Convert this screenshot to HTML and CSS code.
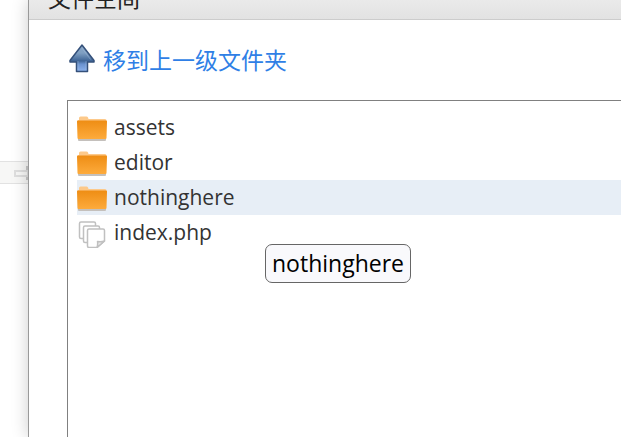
FILE: index.html
```
<!DOCTYPE html>
<html lang="zh-CN">
<head>
  <meta charset="UTF-8">
  <title>文件空间</title>
  <link rel="stylesheet" href="styles.css">
</head>
<body>
  <div class="page">
    <aside class="backdrop">
      <div class="toolbar">
        <svg class="toolbar-icon" width="14" height="18" viewBox="0 0 14 18">
          <path d="M1 7h13v5H1z" fill="#f7f7f6" stroke="#dedede" stroke-width="2"/>
          <path d="M12 2h2v4h-2zM12 13h2v3h-2z" fill="#c8c8c8"/>
        </svg>
      </div>
    </aside>
    <main class="dialog">
      <header class="dialog-header">
        <h1>文件空间</h1>
      </header>
      <div class="dialog-body">
        <a href="#" class="move-up">
          <svg width="28" height="30" viewBox="0 0 28 30">
            <defs>
              <linearGradient id="arrow" x1="0" y1="0" x2="0" y2="1">
                <stop offset="0" stop-color="#8aa6c4"/>
                <stop offset="0.3" stop-color="#7f9fc2"/>
                <stop offset="0.6" stop-color="#3f6596"/>
                <stop offset="0.72" stop-color="#6a92cf"/>
                <stop offset="1" stop-color="#8db3ee"/>
              </linearGradient>
            </defs>
            <path d="M14 1L26 16.500V18H19.500V27.500H8.500V18H2V16.500Z" fill="url(#arrow)" stroke="#34507a" stroke-width="1.500" stroke-linejoin="round"/>
            <path d="M14 4L22.500 15.500M10 17v9M18 17v9" fill="none" stroke="#a9c2e0" stroke-opacity="0.4"/>
          </svg>
          <span>移到上一级文件夹</span>
        </a>
        <div class="file-box">
          <svg class="defs" width="0" height="0">
            <defs>
              <linearGradient id="orange" x1="0" y1="0" x2="0" y2="1">
                <stop offset="0" stop-color="#ee8d14"/>
                <stop offset="1" stop-color="#fdab3c"/>
              </linearGradient>
              <symbol id="folder" viewBox="0 0 30 26">
                <path d="M1 23h28v2q0 1-1 1H2q-1 0-1-1z" fill="#c4c0bc"/>
                <path d="M2 5V3q0-1.500 1.500-1.500h6q1 0 1.500 1l.5 1.500H28q1.500 0 1.500 1.500V8H0.500V5.500z" fill="#fdc98a"/>
                <path d="M0 6.500q0-1 1-1h28q1 0 1 1l-.5 16.500q0 1-1 1H1.500q-1 0-1-1z" fill="url(#orange)"/>
              </symbol>
              <symbol id="pages" viewBox="0 0 30 30">
                <g fill="#fff" stroke="#c0c0c0" stroke-width="1.500" stroke-linejoin="round">
                  <path d="M4 4h13q1.500 0 1.500 1.500v15H4q-1.500 0-1.500-1.500V5.500Q2.500 4 4 4z"/>
                  <path d="M8 8h13q1.500 0 1.500 1.500v15H8q-1.500 0-1.500-1.500V9.500Q6.500 8 8 8z"/>
                  <path d="M12 11h14q1.500 0 1.500 1.500V23L20 29.500h-8q-1.500 0-1.500-1.500V12.500Q10.500 11 12 11z"/>
                  <path d="M27.500 23L20 29.500q1-3 .5-6 4 .5 7-.5z" fill="#e8e8e8"/>
                </g>
              </symbol>
            </defs>
          </svg>
          <ul class="file-list">
            <li><svg class="folder"><use href="#folder"/></svg><span>assets</span></li>
            <li><svg class="folder"><use href="#folder"/></svg><span>editor</span></li>
            <li class="active"><svg class="folder"><use href="#folder"/></svg><span>nothinghere</span></li>
            <li><svg class="pages"><use href="#pages"/></svg><span>index.php</span></li>
          </ul>
          <div class="tooltip" role="tooltip">nothinghere</div>
        </div>
      </div>
    </main>
  </div>
</body>
</html>
```
FILE: styles.css
```
* {
  box-sizing: border-box;
}
body {
  margin: 0;
  background: #fff;
  color: #333;
  font-family: "Open Sans", "Noto Sans CJK SC", sans-serif;
  font-size: 23px;
}
.page {
  display: flex;
  min-height: 100vh;
  overflow: hidden;
}
.backdrop {
  width: 28px;
  padding-top: 161px;
}
.toolbar {
  display: flex;
  align-items: center;
  justify-content: flex-end;
  height: 23px;
  background: #f7f7f6;
  border-top: 1px solid #e2e2e2;
  border-bottom: 1px solid #e2e2e2;
}
.dialog {
  flex: 1;
  display: flex;
  flex-direction: column;
  min-width: 0;
  background: #fff;
  border-left: 1px solid #999;
  box-shadow: 0 0 16px rgba(0, 0, 0, 0.2);
}
.dialog-header {
  display: flex;
  align-items: flex-end;
  height: 20px;
  padding: 0 19px 9px;
  overflow: hidden;
  background: linear-gradient(#eaeaea, #e2e2e2);
  border-bottom: 1px solid #ccc;
}
.dialog-header h1 {
  margin: 0;
  color: #222;
  font-family: "Noto Sans CJK SC", sans-serif;
  font-size: 23px;
  font-weight: normal;
  line-height: 26px;
}
.dialog-body {
  flex: 1;
  display: flex;
  flex-direction: column;
  padding: 24px 0 0 39px;
}
.move-up {
  display: flex;
  align-items: center;
  gap: 7px;
  height: 30px;
  margin-bottom: 26px;
  color: #2f7fe6;
  font-family: "Noto Sans CJK SC", sans-serif;
  line-height: 30px;
  text-decoration: none;
}
.file-box {
  position: relative;
  flex: 1;
  margin-left: -1px;
  padding: 9px 0 0 9px;
  border: 1px solid #808080;
  border-width: 1px 0 0 1px;
}
.defs {
  position: absolute;
}
.file-list {
  margin: 0;
  padding: 0;
  list-style: none;
}
.file-list li {
  display: flex;
  align-items: center;
  gap: 7px;
  height: 35px;
  font-size: 21px;
  line-height: 35px;
}
.file-list .active {
  background: #e7eef6;
}
.folder {
  width: 30px;
  height: 26px;
}
.pages {
  width: 30px;
  height: 30px;
}
.tooltip {
  position: absolute;
  top: 143px;
  left: 197px;
  padding: 0 6px;
  background: #f9f9fc;
  border: 1px solid #666;
  border-radius: 7px;
  color: #000;
  font-size: 23px;
  line-height: 37px;
}
```
